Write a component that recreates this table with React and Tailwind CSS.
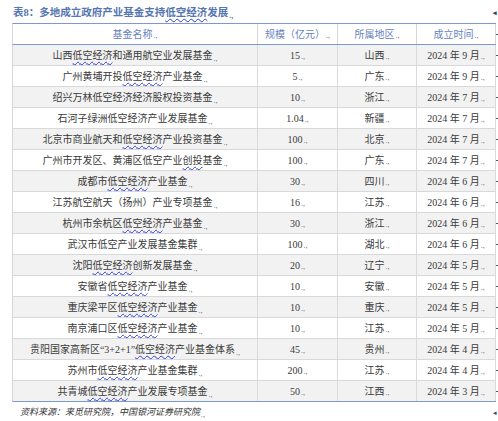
import React from 'react';

const ROWS = [
  ['山西低空经济和通用航空业发展基金', '低空经济', '15', '山西', '9'],
  ['广州黄埔开投低空经济产业基金', '低空经济', '5', '广东', '9'],
  ['绍兴万林低空经济经济股权投资基金', null, '10', '浙江', '7'],
  ['石河子绿洲低空经济产业发展基金', null, '1.04', '新疆', '7'],
  ['北京市商业航天和低空经济产业投资基金', '低空经济', '100', '北京', '7'],
  ['广州市开发区、黄浦区低空产业创投基金', '创投', '100', '广东', '7'],
  ['成都市低空经济产业基金', '低空经济', '30', '四川', '6'],
  ['江苏航空航天（扬州）产业专项基金', null, '16', '江苏', '6'],
  ['杭州市余杭区低空经济产业基金', '低空经济', '30', '浙江', '6'],
  ['武汉市低空产业发展基金集群', null, '100', '湖北', '6'],
  ['沈阳低空经济创新发展基金', '低空经济', '20', '辽宁', '5'],
  ['安徽省低空经济产业基金', '低空经济', '10', '安徽', '5'],
  ['重庆梁平区低空经济产业基金', '低空经济', '10', '重庆', '5'],
  ['南京浦口区低空经济产业基金', '低空经济', '10', '江苏', '5'],
  ['贵阳国家高新区“3+2+1”低空经济产业基金体系', '低空经济', '45', '贵州', '4'],
  ['苏州市低空经济产业基金集群', '低空经济', '200', '江苏', '4'],
  ['共青城低空经济产业发展专项基金', '低空经济', '50', '江西', '3'],
];

const COLS = 'grid grid-cols-[245px_80px_79px_79px]';

// word's end-of-cell mark
function Mark() {
  return <span className="text-[8px] text-gray-500 ml-px relative top-[2px]">.,</span>;
}

function Wavy({ children }) {
  return (
    <span className="underline decoration-wavy decoration-[#2f3bd8] decoration-1 underline-offset-[2px]">
      {children}
    </span>
  );
}

function FundName({ name, wavy }) {
  if (!wavy) return <>{name}</>;
  const i = name.indexOf(wavy);
  return (
    <>
      {name.slice(0, i)}
      <Wavy>{wavy}</Wavy>
      {name.slice(i + wavy.length)}
    </>
  );
}

function RowEnd() {
  return (
    <div className="w-[3px] flex items-center justify-end">
      <span className="w-[2px] h-px bg-gray-600" />
    </div>
  );
}

export default function App() {
  return (
    <div className="w-[498px] h-[421px] bg-white overflow-hidden font-['Liberation_Serif','Noto_Sans_CJK_SC',serif]">
      {/* title */}
      <div className="h-[23px] pt-[3px] pl-[13px] flex items-center text-[10.5px] font-bold text-[#5676b0]">
        <span>
          表8：多地成立政府产业基金支持<Wavy>低空经济</Wavy>发展<Mark />
        </span>
        <span className="ml-auto mr-px text-[7px] text-gray-700">◂</span>
      </div>

      {/* table */}
      <div className="ml-[12px] w-[486px]">
        <div className="flex">
          <div className={`${COLS} h-[22px] border-t border-b border-t-[#7d9ace] border-b-[#7d9ace] border-l border-l-[#d6d6d6] text-[10px] text-[#6683bd]`}>
            <div className="flex items-center justify-center border-r border-[#d6d6d6]">基金名称<Mark /></div>
            <div className="flex items-center justify-center border-r border-[#d6d6d6]">规模（亿元）<Mark /></div>
            <div className="flex items-center justify-center border-r border-[#d6d6d6]">所属地区<Mark /></div>
            <div className="flex items-center justify-center border-r border-[#d6d6d6]">成立时间<Mark /></div>
          </div>
          <RowEnd />
        </div>

        {ROWS.map(([name, wavy, size, region, month], idx) => {
          const last = idx === ROWS.length - 1;
          return (
            <div key={idx} className="flex">
              <div
                className={`${COLS} h-[21px] border-l border-l-[#d6d6d6] border-b ${last ? 'border-b-[#7d9ace]' : 'border-b-[#d9d9d9]'} ${idx % 2 === 0 ? 'bg-[#f2f2f2]' : 'bg-white'} text-[10px] text-[#3a3a3a]`}
              >
                <div className="flex items-center justify-center border-r border-[#d9d9d9] whitespace-nowrap">
                  <span><FundName name={name} wavy={wavy} /><Mark /></span>
                </div>
                <div className="flex items-center justify-center border-r border-[#d9d9d9]">
                  {size}<Mark />
                </div>
                <div className="flex items-center justify-center border-r border-[#d9d9d9]">
                  {region}<Mark />
                </div>
                <div className="flex items-center justify-center border-r border-[#d9d9d9] whitespace-pre">
                  {`2024 年 ${month} 月`}<Mark />
                </div>
              </div>
              <RowEnd />
            </div>
          );
        })}
      </div>

      {/* source */}
      <div className="h-[20px] pt-[2px] pl-[20px] flex items-center text-[9px] italic text-[#333]">
        <span>资料来源：来觅研究院，中国银河证券研究院<Mark /></span>
        <span className="ml-auto mr-px text-[7px] not-italic text-gray-700">◂</span>
      </div>
    </div>
  );
}
